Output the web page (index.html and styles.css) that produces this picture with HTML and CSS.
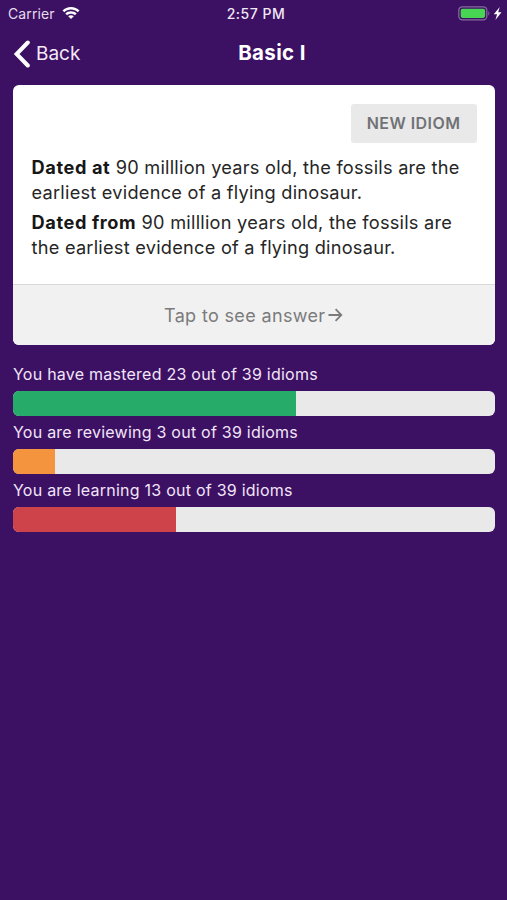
FILE: index.html
```
<!DOCTYPE html>
<html lang="en">
<head>
<meta charset="utf-8">
<meta name="viewport" content="width=device-width, initial-scale=1">
<title>Basic I</title>
<link rel="stylesheet" href="styles.css">
</head>
<body>
<div class="status">
  <div class="carrier"><span>Carrier</span>
    <svg width="18" height="13" viewBox="0 0 18 13" fill="#fff"><path d="M9 0C5.700 0 2.700 1.300.5 3.400L2.300 5.200C4.100 3.500 6.400 2.600 9 2.600s4.900.9 6.700 2.600l1.800-1.800C15.300 1.300 12.300 0 9 0Z"/><path d="M9 4.200c-2.200 0-4.200.8-5.700 2.200l1.800 1.800C6.100 7.200 7.500 6.700 9 6.700s2.900.5 3.900 1.500l1.800-1.800C13.200 5 11.200 4.200 9 4.200Z"/><path d="M9 8.200c-1.100 0-2.100.4-2.800 1.100L9 12.100l2.800-2.800C11.100 8.600 10.100 8.200 9 8.200Z"/></svg>
  </div>
  <div class="time">2:57 PM</div>
  <div class="power">
    <svg width="45" height="15" viewBox="0 0 45 15"><rect x=".8" y=".8" width="28" height="13" rx="3.500" fill="none" stroke="#84699e" stroke-width="1.300"/><rect x="2.700" y="2.700" width="24.400" height="9.200" rx="1.800" fill="#47d553"/><path d="M30.300 5.200c1.400.5 1.400 3.700 0 4.200Z" fill="#84699e"/><path d="M41.700 1 35.800 8.200h3.300L37.400 14l6.100-7.800h-3.300Z" fill="#fff"/></svg>
  </div>
</div>
<header class="nav">
  <a class="back"><svg width="17" height="28" viewBox="0 0 17 28" fill="none" stroke="#fff" stroke-width="4" stroke-linecap="round" stroke-linejoin="miter"><path d="M14.800 2.500 3.600 14l11.200 11.500"/></svg><span>Back</span></a>
  <h1>Basic I</h1>
</header>
<main>
  <section class="card">
    <div class="card-body">
      <button class="new">NEW IDIOM</button>
      <p><b>Dated at</b> 90 milllion years old, the fossils are the<br>earliest evidence of a flying dinosaur.</p>
      <p><b>Dated from</b> 90 milllion years old, the fossils are<br>the earliest evidence of a flying dinosaur.</p>
    </div>
    <div class="answer"><span>Tap to see answer</span><svg width="15" height="14" viewBox="0 0 15 14" fill="none" stroke="#7b7b7b" stroke-width="1.800"><path d="M.5 7h12.800M7.600 1.200 13.300 7l-5.700 5.800"/></svg></div>
  </section>
  <section class="progress">
    <div class="label">You have mastered 23 out of 39 idioms</div>
    <div class="bar"><div class="fill green"></div></div>
    <div class="label">You are reviewing 3 out of 39 idioms</div>
    <div class="bar"><div class="fill orange"></div></div>
    <div class="label">You are learning 13 out of 39 idioms</div>
    <div class="bar"><div class="fill red"></div></div>
  </section>
</main>
</body>
</html>
```
FILE: styles.css
```
* { box-sizing: border-box; }
body { margin: 0; min-height: 900px; background: #3c1063; color: #fff; font-family: Inter, sans-serif; }
svg { display: block; flex: none; }
.status { display: grid; grid-template-columns: 1fr auto 1fr; align-items: center; height: 27px; padding: 0 4px 0 8px; font: 14px/27px Inter, sans-serif; }
.carrier { display: flex; align-items: center; gap: 7px; letter-spacing: .12px; color: #e6dcec; }
.time { padding-left: 1px; font-size: 14px; font-weight: 500; letter-spacing: .5px; color: #f1e8f5; }
.power { justify-self: end; }
.nav { display: grid; grid-template-columns: 1fr auto 1fr; align-items: center; height: 53px; padding: 0 13px; margin-bottom: 5px; }
.back { display: flex; align-items: center; gap: 6px; font-size: 19px; color: #f3e9f8; }
h1 { margin: -2px 0 0; padding-left: 37px; font-size: 20.500px; line-height: 28px; font-weight: 700; letter-spacing: .35px; }
main { padding: 0 12.500px 0 13px; }
.card { height: 260px; display: flex; flex-direction: column; border-radius: 6px; overflow: hidden; background: #fff; color: #262626; }
.card-body { flex: 1; display: flex; flex-direction: column; padding: 18.500px 18px 0 18.500px; }
.new { align-self: flex-end; width: 126px; height: 39px; margin-bottom: 12.500px; padding: 0; border: 0; border-radius: 3px; background: #e9e9e9; color: #707276; font: 600 16px/39px Inter, sans-serif; letter-spacing: .45px; white-space: nowrap; }
p { margin: 0 0 6px; font-size: 18.200px; line-height: 24.500px; letter-spacing: .24px; white-space: nowrap; }
b { color: #171717; font-weight: 700; letter-spacing: .6px; }
.answer { display: flex; align-items: center; justify-content: center; gap: 3px; height: 61px; border-top: 1px solid #d8d8d8; background: #f1f1f1; color: #7b7b7b; font-size: 18px; letter-spacing: .35px; }
.progress { padding-top: 17px; }
.label { height: 28.500px; font-size: 16px; line-height: 25px; letter-spacing: .24px; color: #f2e5f8; white-space: nowrap; }
.bar { height: 25px; margin-bottom: 4.700px; border-radius: 6px; overflow: hidden; background: #e9e9e9; }
.fill { height: 100%; }
.green { width: 58.700%; background: #27ab69; }
.orange { width: 8.800%; background: #f5943f; }
.red { width: 33.800%; background: #ce434a; }
```
